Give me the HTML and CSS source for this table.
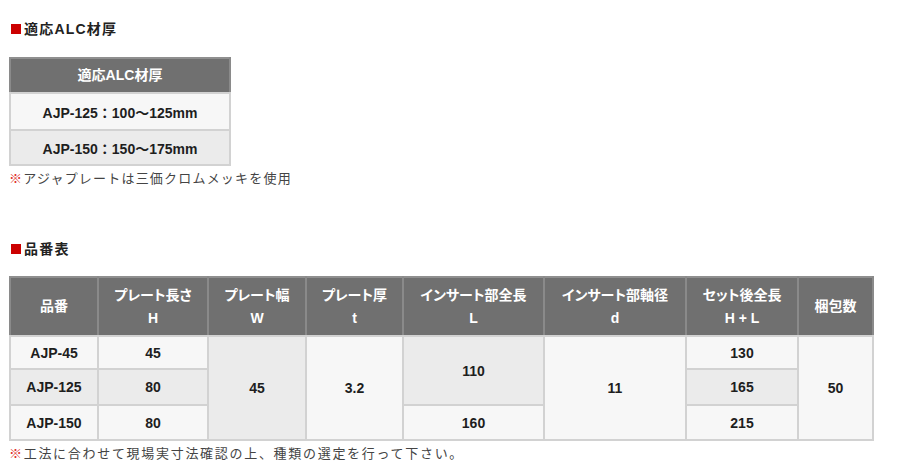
FILE: index.html
```html
<!DOCTYPE html>
<html lang="ja">
<head>
<meta charset="utf-8">
<link rel="stylesheet" href="styles.css">
</head>
<body>
<h2 class="heading">適応ALC材厚</h2>
<table class="spec small">
  <tr><th>適応ALC材厚</th></tr>
  <tr class="r1"><td>AJP-125：100〜125mm</td></tr>
  <tr class="r2"><td>AJP-150：150〜175mm</td></tr>
</table>
<p class="note"><span class="mark">※</span>アジャプレートは三価クロムメッキを使用</p>

<h2 class="heading second">品番表</h2>
<table class="spec big">
  <colgroup>
    <col style="width:88px"><col style="width:110px"><col style="width:98px"><col style="width:97px"><col style="width:141px"><col style="width:142px"><col style="width:112px"><col style="width:75px">
  </colgroup>
  <tr class="head">
    <th>品番</th>
    <th>プレート長さ<br>H</th>
    <th>プレート幅<br>W</th>
    <th>プレート厚<br>t</th>
    <th>インサート部全長<br>L</th>
    <th>インサート部軸径<br>d</th>
    <th>セット後全長<br>H + L</th>
    <th>梱包数</th>
  </tr>
  <tr class="b1">
    <td class="lt">AJP-45</td>
    <td class="lt">45</td>
    <td class="dk" rowspan="3">45</td>
    <td class="lt" rowspan="3">3.2</td>
    <td class="dk" rowspan="2">110</td>
    <td class="lt" rowspan="3">11</td>
    <td class="lt">130</td>
    <td class="lt" rowspan="3">50</td>
  </tr>
  <tr class="b2">
    <td class="dk">AJP-125</td>
    <td class="dk">80</td>
    <td class="dk">165</td>
  </tr>
  <tr class="b3">
    <td class="lt">AJP-150</td>
    <td class="lt">80</td>
    <td class="lt">160</td>
    <td class="lt">215</td>
  </tr>
</table>
<p class="note wide"><span class="mark">※</span>工法に合わせて現場実寸法確認の上、種類の選定を行って下さい。</p>
</body>
</html>
```

FILE: styles.css
```css
html, body {
  margin: 0;
  padding: 0;
  background: #fff;
}
body {
  padding: 0 9px;
  font-family: "Liberation Sans", "Noto Sans CJK JP", sans-serif;
  color: #222;
}
.heading {
  margin: 19px 0 0 0;
  font-size: 14px;
  line-height: 20px;
  font-weight: bold;
  letter-spacing: 1.2px;
  color: #222;
  display: flex;
  align-items: center;
}
.heading::before {
  content: "";
  display: block;
  width: 10px;
  height: 10px;
  background: #cc0000;
  margin: 0 3px 0 2px;
}
.heading.second {
  margin-top: 51px;
}
.spec {
  border-collapse: collapse;
  table-layout: fixed;
  margin-top: 18px;
}
.heading.second + .spec {
  margin-top: 17px;
}
.spec th, .spec td {
  border: 2px solid #d2d2d2;
  text-align: center;
  font-weight: bold;
  font-size: 14px;
  padding: 0;
}
.spec th {
  background: #707070;
  color: #fff;
  line-height: 23px;
  font-feature-settings: "palt";
  border-left-color: #8a8a8a;
  border-right-color: #8a8a8a;
  border-top-color: #8f8f8f;
}
.spec td {
  color: #1e1e1e;
}
.small {
  width: 222px;
}
.small th { height: 33px; }
.small .r1 td { height: 35px; background: #f7f7f7; }
.small .r2 td { height: 33px; background: #ebebeb; }
.big {
  width: 863px;
}
.big .head th { height: 57px; }
.big .b1 td { height: 31px; }
.big .b2 td { height: 34px; }
.big .b3 td { height: 33px; }
.lt { background: #f7f7f7; }
.dk { background: #ebebeb; }
.note {
  margin: 2px 0 0 0;
  font-size: 13px;
  line-height: 20px;
  letter-spacing: 1.2px;
  color: #444;
  font-family: "Noto Sans CJK JP", sans-serif;
}
.note.wide {
  letter-spacing: 1.7px;
}
.mark {
  color: #e0302a;
}
```
